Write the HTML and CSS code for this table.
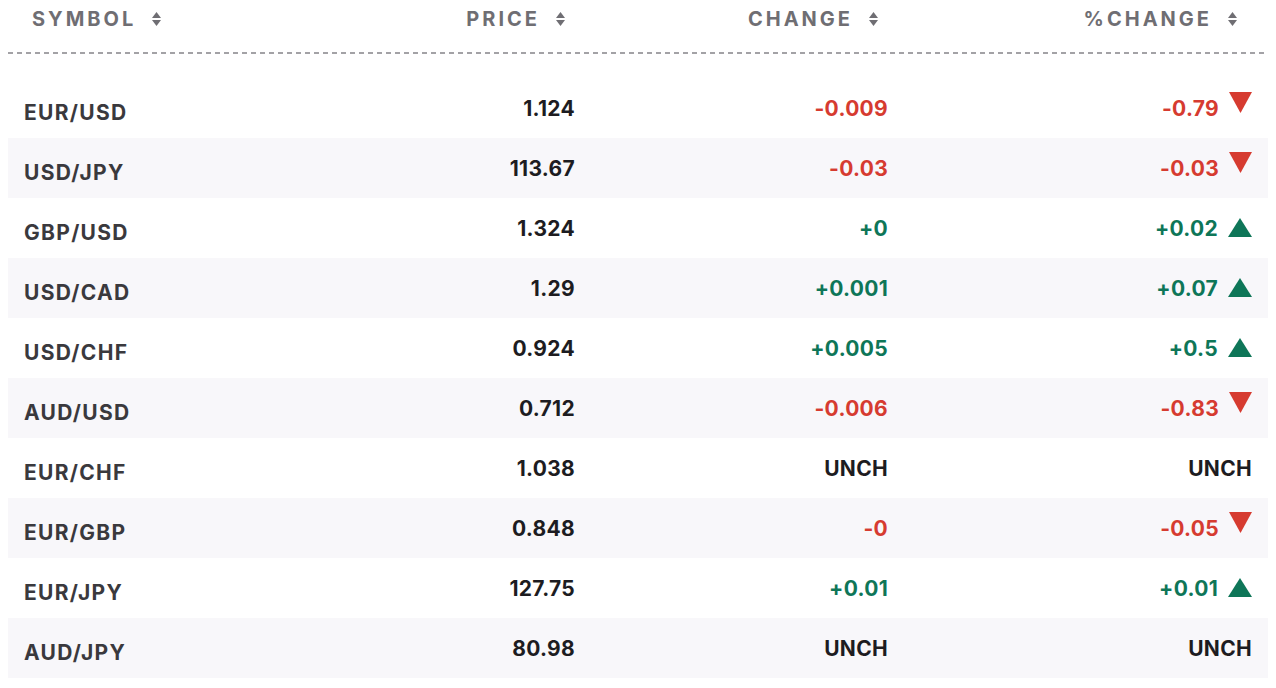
FILE: index.html
```html
<!DOCTYPE html>
<html>
<head>
<meta charset="utf-8">
<link rel="stylesheet" href="styles.css">
</head>
<body>
<div class="table">
  <div class="head">
    <div class="th th-symbol">SYMBOL <svg class="sort" viewBox="0 0 9 14"><path d="M4.5 0L9 6H0Z"/><path d="M0 8H9L4.5 14Z"/></svg></div>
    <div class="th th-num">PRICE <svg class="sort" viewBox="0 0 9 14"><path d="M4.5 0L9 6H0Z"/><path d="M0 8H9L4.5 14Z"/></svg></div>
    <div class="th th-num">CHANGE <svg class="sort" viewBox="0 0 9 14"><path d="M4.5 0L9 6H0Z"/><path d="M0 8H9L4.5 14Z"/></svg></div>
    <div class="th th-num th-last">%CHANGE <svg class="sort" viewBox="0 0 9 14"><path d="M4.5 0L9 6H0Z"/><path d="M0 8H9L4.5 14Z"/></svg></div>
  </div>
  <div class="rule"></div>
  <div class="rows">
    <div class="row">
      <div class="sym">EUR/USD</div><div class="num">1.124</div>
      <div class="num down">-0.009</div>
      <div class="num down pct">-0.79 <svg class="tri tri-down" viewBox="0 0 23 21"><path d="M0 0H23L11.5 21Z"/></svg></div>
    </div>
    <div class="row alt">
      <div class="sym">USD/JPY</div><div class="num">113.67</div>
      <div class="num down">-0.03</div>
      <div class="num down pct">-0.03 <svg class="tri tri-down" viewBox="0 0 23 21"><path d="M0 0H23L11.5 21Z"/></svg></div>
    </div>
    <div class="row">
      <div class="sym">GBP/USD</div><div class="num">1.324</div>
      <div class="num up">+0</div>
      <div class="num up pct">+0.02 <svg class="tri tri-up" viewBox="0 0 24 19"><path d="M12 0L24 19H0Z"/></svg></div>
    </div>
    <div class="row alt">
      <div class="sym">USD/CAD</div><div class="num">1.29</div>
      <div class="num up">+0.001</div>
      <div class="num up pct">+0.07 <svg class="tri tri-up" viewBox="0 0 24 19"><path d="M12 0L24 19H0Z"/></svg></div>
    </div>
    <div class="row">
      <div class="sym">USD/CHF</div><div class="num">0.924</div>
      <div class="num up">+0.005</div>
      <div class="num up pct">+0.5 <svg class="tri tri-up" viewBox="0 0 24 19"><path d="M12 0L24 19H0Z"/></svg></div>
    </div>
    <div class="row alt">
      <div class="sym">AUD/USD</div><div class="num">0.712</div>
      <div class="num down">-0.006</div>
      <div class="num down pct">-0.83 <svg class="tri tri-down" viewBox="0 0 23 21"><path d="M0 0H23L11.5 21Z"/></svg></div>
    </div>
    <div class="row">
      <div class="sym">EUR/CHF</div><div class="num">1.038</div>
      <div class="num">UNCH</div>
      <div class="num pct">UNCH</div>
    </div>
    <div class="row alt">
      <div class="sym">EUR/GBP</div><div class="num">0.848</div>
      <div class="num down">-0</div>
      <div class="num down pct">-0.05 <svg class="tri tri-down" viewBox="0 0 23 21"><path d="M0 0H23L11.5 21Z"/></svg></div>
    </div>
    <div class="row">
      <div class="sym">EUR/JPY</div><div class="num">127.75</div>
      <div class="num up">+0.01</div>
      <div class="num up pct">+0.01 <svg class="tri tri-up" viewBox="0 0 24 19"><path d="M12 0L24 19H0Z"/></svg></div>
    </div>
    <div class="row alt">
      <div class="sym">AUD/JPY</div><div class="num">80.98</div>
      <div class="num">UNCH</div>
      <div class="num pct">UNCH</div>
    </div>
  </div>
</div>
</body>
</html>
```

FILE: styles.css
```css
* { box-sizing: border-box; }
html, body { margin: 0; padding: 0; background: #ffffff; }
body { font-family: Inter, "Liberation Sans", sans-serif; }

.table { padding: 0 8px; }

.head {
  display: grid;
  grid-template-columns: 276px 275px 313px 364px;
  padding: 0 16px;
  height: 38px;
  align-items: center;
}
.th {
  display: flex;
  align-items: center;
  gap: 16px;
  font-size: 20px;
  font-weight: 700;
  letter-spacing: 3px;
  color: #6f6e73;
}
.th-symbol { padding-left: 8px; }
.th-num { justify-content: flex-end; padding-right: 10px; }
.th-last { padding-right: 15px; }
.sort { width: 9px; height: 14px; fill: #6f6e73; flex: none; }

.rule {
  height: 2px;
  margin-top: 14px;
  background: repeating-linear-gradient(90deg, #a3a2a6 0 5px, transparent 5px 9px);
}

.rows { margin-top: 24px; }
.row {
  display: grid;
  grid-template-columns: 276px 275px 313px 364px;
  padding: 0 16px;
  height: 60px;
  align-items: center;
}
.row.alt { background: #f8f7fa; }

.sym {
  font-size: 21px;
  font-weight: 700;
  color: #3a393d;
  letter-spacing: 1.3px;
  padding-top: 9px;
}
.num {
  display: flex;
  justify-content: flex-end;
  align-items: center;
  gap: 10px;
  font-size: 21px;
  font-weight: 700;
  color: #1d1c21;
  letter-spacing: 0.3px;
}
.num.down { color: #d63b30; }
.num.up { color: #0e7658; }

.tri { width: 23px; height: 21px; flex: none; }
.tri-down { fill: #d63b30; margin-top: -12px; }
.tri-up { width: 24px; height: 19px; fill: #0e7658; margin-top: -2px; }
```
